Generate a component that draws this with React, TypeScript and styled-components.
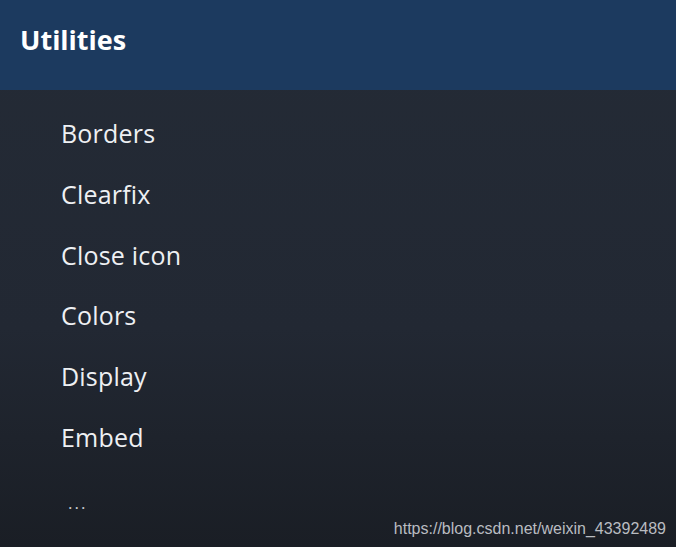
import styled, { createGlobalStyle } from "styled-components";

const items = ["Borders", "Clearfix", "Close icon", "Colors", "Display", "Embed"];

function App() {
  return (
    <>
      <GlobalStyle />
      <Page>
        <Header>
          <Title>Utilities</Title>
        </Header>
        <Menu>
          {items.map((item) => (
            <MenuItem key={item}>{item}</MenuItem>
          ))}
          <More>...</More>
        </Menu>
        <Watermark>https://blog.csdn.net/weixin_43392489</Watermark>
      </Page>
    </>
  );
}

const GlobalStyle = createGlobalStyle`
  html, body {
    margin: 0;
    padding: 0;
    background: #1b1f27;
  }
`;

const Page = styled.div`
  position: relative;
  width: 676px;
  height: 547px;
  overflow: hidden;
  display: flex;
  flex-direction: column;
  background: linear-gradient(to bottom, #242b36 0%, #222833 60%, #1a1e25 100%);
  font-family: "Open Sans", "Noto Sans", sans-serif;
`;

const Header = styled.div`
  height: 90px;
  flex-shrink: 0;
  display: flex;
  align-items: flex-start;
  padding: 20px 0 0 20px;
  box-sizing: border-box;
  background: #1c3a5f;
`;

const Title = styled.h1`
  margin: 0;
  font-size: 27px;
  line-height: 40px;
  font-weight: 700;
  color: #ffffff;
`;

const Menu = styled.ul`
  list-style: none;
  margin: 0;
  padding: 13px 0 0 61px;
  display: flex;
  flex-direction: column;
`;

const MenuItem = styled.li`
  height: 60.8px;
  line-height: 60.8px;
  font-size: 25px;
  color: #eef0f3;
  letter-spacing: 0.2px;
`;

const More = styled.li`
  height: 60.8px;
  line-height: 60.8px;
  padding: 5px 0 0 7px;
  font-size: 17px;
  color: #c9cdd3;
  letter-spacing: 2px;
`;

const Watermark = styled.div`
  position: absolute;
  right: 10px;
  bottom: 9px;
  font-family: "Liberation Sans", Arial, sans-serif;
  font-size: 16px;
  color: #b9bcc1;
`;

export default App;
